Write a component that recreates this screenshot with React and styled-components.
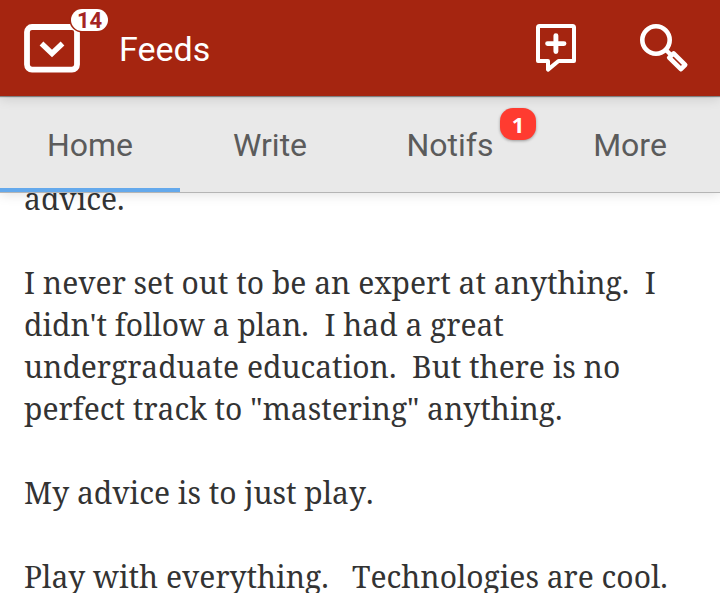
import React from "react";
import styled, { createGlobalStyle } from "styled-components";

const GlobalStyle = createGlobalStyle`
  * { box-sizing: border-box; }
  body { margin: 0; background: #fff; }
`;

const Screen = styled.div`
  display: flex;
  flex-direction: column;
  width: 720px;
  height: 593px;
  overflow: hidden;
  background: #fff;
  font-family: Roboto, sans-serif;
`;

const Toolbar = styled.header`
  position: relative;
  z-index: 3;
  flex: none;
  display: flex;
  align-items: center;
  height: 96px;
  padding: 0 30px 0 24px;
  background: #a52510;
  box-shadow: 0 1px 1px rgba(0, 0, 0, 0.4), 0 2px 12px rgba(0, 0, 0, 0.14);
  color: #fff;
`;

const FeedButton = styled.div`
  position: relative;
  width: 56px;
  height: 48px;
`;

const FeedCount = styled.span`
  position: absolute;
  left: 47px;
  top: -15px;
  width: 37px;
  height: 22px;
  border-radius: 11px;
  background: #fff;
  box-shadow: 0 0 0 1.5px #a52510;
  color: #a42423;
  font: 700 22px/23px Roboto, sans-serif;
  text-align: center;
`;

const Title = styled.h1`
  flex: 1;
  margin: 1px 0 0 39px;
  font-size: 34px;
  font-weight: 400;
  line-height: 40px;
`;

const Actions = styled.div`
  display: flex;
  gap: 62px;
`;

const Icon = styled.svg`
  display: block;
  overflow: visible;
  fill: none;
  stroke: #fff;
`;

const TabBar = styled.nav`
  position: relative;
  z-index: 2;
  flex: none;
  display: grid;
  grid-template-columns: repeat(4, 1fr);
  height: 96px;
  background: #e9e9e9;
  box-shadow: 0 1px 0 #b5b5b5, 0 2px 12px rgba(0, 0, 0, 0.13);
`;

const Tab = styled.div`
  position: relative;
  display: flex;
  align-items: center;
  justify-content: center;
  padding-top: 6px;
  border-bottom: 4px solid ${(p) => (p.$active ? "#64a9ec" : "transparent")};
  color: #5b5b5b;
  font-size: 32px;
  line-height: 38px;
`;

const TabBadge = styled.span`
  position: absolute;
  left: 140px;
  top: 12px;
  width: 36px;
  height: 32px;
  border-radius: 13px;
  background: #ff3b30;
  box-shadow: 0 1px 3px rgba(0, 0, 0, 0.35);
  color: #fff;
  font: 700 22px/33px "Open Sans", sans-serif;
  text-align: center;
`;

const Content = styled.main`
  flex: 1;
  min-height: 0;
  overflow: hidden;
  padding: 0 24px;
`;

const Article = styled.article`
  margin-top: -14px;
  color: #333;
  font-family: "Noto Serif", "Droid Serif", "DejaVu Serif Condensed", "DejaVu Serif", serif;
  font-size: 30px;
  font-kerning: none;
  line-height: 42px;
`;

const Paragraph = styled.p`
  margin: 0 0 42px;
`;

const Line = styled.span`
  display: block;
  white-space: pre;
`;

const tabs = [
  { label: "Home", active: true },
  { label: "Write" },
  { label: "Notifs", badge: "1" },
  { label: "More" },
];

const paragraphs = [
  ["advice."],
  [
    "I never set out to be an expert at anything.  I",
    "didn't follow a plan.  I had a great",
    "undergraduate education.  But there is no",
    'perfect track to "mastering" anything.',
  ],
  ["My advice is to just play."],
  ["Play with everything.   Technologies are cool."],
];

export default function App() {
  return (
    <>
      <GlobalStyle />
      <Screen>
        <Toolbar>
          <FeedButton>
            <Icon width="56" height="48" viewBox="0 0 56 48">
              <rect x="3" y="3" width="50" height="42.6" rx="5" strokeWidth="5.8" />
              <path d="M17.5 19.5 28 29.5 38.5 19.5" strokeWidth="5.4" />
            </Icon>
            <FeedCount>14</FeedCount>
          </FeedButton>
          <Title>Feeds</Title>
          <Actions>
            <Icon width="42" height="48" viewBox="0 0 42 48">
              <path d="M3.5 2H36.5Q38 2 38 3.5V37H22.5L12 45.6V37H2V3.5Q2 2 3.5 2Z" strokeWidth="4" strokeLinejoin="round" />
              <path d="M19.9 11.6V27.6M11.6 19.6H28" strokeWidth="4.9" strokeLinecap="round" />
            </Icon>
            <Icon width="50" height="48" viewBox="0 0 50 48">
              <circle cx="16" cy="16" r="13.7" strokeWidth="4.6" />
              <path d="M25.5 25.5 30.5 30.5" strokeWidth="4.2" />
              <path d="M33.6 29.4 45.2 40.8 40.9 45.2 29.2 33.6Z" strokeWidth="4.6" strokeLinejoin="round" />
            </Icon>
          </Actions>
        </Toolbar>
        <TabBar>
          {tabs.map((t) => (
            <Tab key={t.label} $active={t.active}>
              {t.label}
              {t.badge && <TabBadge>{t.badge}</TabBadge>}
            </Tab>
          ))}
        </TabBar>
        <Content>
          <Article>
            {paragraphs.map((lines, i) => (
              <Paragraph key={i}>
                {lines.map((text) => (
                  <Line key={text}>{text}</Line>
                ))}
              </Paragraph>
            ))}
          </Article>
        </Content>
      </Screen>
    </>
  );
}
